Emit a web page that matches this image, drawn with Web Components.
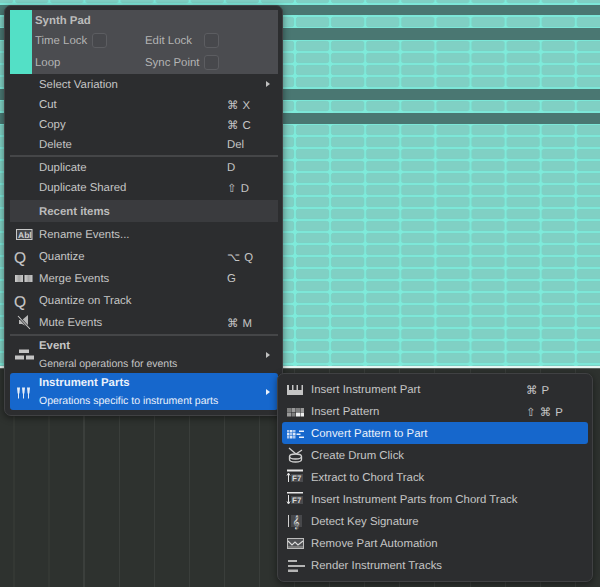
<!DOCTYPE html>
<html>
<head>
<meta charset="utf-8">
<title>Context menu</title>
<style>
    html, body { margin: 0; padding: 0; background: #2e322f; }
    body {
        width: 600px;
        height: 587px;
        overflow: hidden;
        position: relative;
        font: 11.4px "Liberation Sans", "DejaVu Sans", sans-serif;
        text-rendering: geometricPrecision;
        color: #c6c6c6;
    }
    #mainMenu { position: absolute; left: 4px; top: 5px; width: 279px; }
    #partsMenu { position: absolute; left: 277px; top: 373px; width: 316px; --menu-pad-left: 4px; }
</style>
</head>
<body>
<arrangement-view></arrangement-view>

<context-menu id="mainMenu">
    <track-header name="Synth Pad"></track-header>
    <menu-item arrow short>Select Variation</menu-item>
    <menu-item short shortcut="⌘ X">Cut</menu-item>
    <menu-item short shortcut="⌘ C">Copy</menu-item>
    <menu-item short shortcut="Del">Delete</menu-item>
    <menu-divider></menu-divider>
    <menu-item short shortcut="D">Duplicate</menu-item>
    <menu-item short shortcut="⇧ D">Duplicate Shared</menu-item>
    <menu-heading>Recent items</menu-heading>
    <menu-item icon="rename">Rename Events...</menu-item>
    <menu-item icon="quantize" shortcut="⌥ Q">Quantize</menu-item>
    <menu-item icon="merge" shortcut="G">Merge Events</menu-item>
    <menu-item icon="quantize">Quantize on Track</menu-item>
    <menu-item icon="mute" shortcut="⌘ M">Mute Events</menu-item>
    <menu-divider></menu-divider>
    <menu-item icon="event" arrow>Event<span slot="desc">General operations for events</span></menu-item>
    <menu-item icon="instrument" arrow active>Instrument Parts<span slot="desc">Operations specific to instrument parts</span></menu-item>
</context-menu>

<context-menu id="partsMenu" style="--shortcut-left: 244px">
    <menu-item icon="piano" shortcut="⌘ P">Insert Instrument Part</menu-item>
    <menu-item icon="pattern" shortcut="⇧ ⌘ P">Insert Pattern</menu-item>
    <menu-item icon="convert" active>Convert Pattern to Part</menu-item>
    <menu-item icon="drum">Create Drum Click</menu-item>
    <menu-item icon="extract">Extract to Chord Track</menu-item>
    <menu-item icon="insertchord">Insert Instrument Parts from Chord Track</menu-item>
    <menu-item icon="key">Detect Key Signature</menu-item>
    <menu-item icon="automation">Remove Part Automation</menu-item>
    <menu-item icon="render">Render Instrument Tracks</menu-item>
</context-menu>

<script>
const ICONS = {
    rename: `<rect x="4.5" y="6.5" width="15.5" height="10" fill="#444548" stroke="#c8c8c8"/>
        <text x="6" y="14.5" font-size="8.5" font-weight="bold" fill="#d0d0d0" font-family="Liberation Sans">Abl</text>`,
    quantize: `<text x="2" y="17.5" font-size="15.5" fill="#c8c8c8" stroke="#c8c8c8" stroke-width=".15" font-family="Liberation Sans">Q</text>`,
    merge: `<defs><linearGradient id="a"><stop offset="0" stop-color="#d0d0d0"/><stop offset=".5" stop-color="#a4a4a4"/><stop offset="1" stop-color="#c8c8c8"/></linearGradient></defs>
        <rect x="3" y="8" width="8" height="7" fill="url(#a)"/><rect x="12.5" y="8" width="8" height="7" fill="url(#a)"/>`,
    mute: `<path d="M7 9h3l6-5v12l-6-3H7z" fill="#b8b8b8"/><path d="M5.5 4.5 18 18" stroke="#2c2d2f" stroke-width="2.4"/><path d="M6 5 18 18" stroke="#c8c8c8" stroke-width="1.1"/>`,
    event: `<g fill="#c4c4c4"><rect x="7" y="5.5" width="10" height="3.5"/><rect x="3" y="11.5" width="9" height="4"/><rect x="14" y="11.5" width="8" height="4"/></g>`,
    instrument: `<g fill="#e2ecf8"><path d="M5 6.5h3l-.6 6H5.6z"/><path d="M10 6.5h3l-.6 6h-1.8z"/><path d="M15 6.5h3l-.6 6h-1.8z"/><rect x="6" y="12" width="1" height="5.5"/><rect x="11" y="12" width="1" height="5.5"/><rect x="16" y="12" width="1" height="5.5"/></g>`,
    piano: `<path d="M3 7h2v5h3V7h1.500v5h3V7H14v5h3.500V7H19v10H3z" fill="#c4c4c4"/>`,
    pattern: `<g><rect x="3" y="8" width="4" height="4" fill="#7e7e7e"/><rect x="7.500" y="8" width="4" height="4" fill="#9a9a9a"/><rect x="12" y="8" width="4" height="4" fill="#7e7e7e"/><rect x="16.500" y="8" width="3.500" height="4" fill="#9a9a9a"/>
        <rect x="3" y="12.500" width="4" height="4" fill="#9a9a9a"/><rect x="7.500" y="12.500" width="4" height="4" fill="#7e7e7e"/><rect x="12" y="12.500" width="4" height="4" fill="#eeeeee"/><rect x="16.500" y="12.500" width="3.500" height="4" fill="#eeeeee"/></g>`,
    convert: `<g fill="#a9c6ee"><rect x="3" y="8" width="2.500" height="2.500"/><rect x="6" y="8" width="2.500" height="2.500" fill="#dce8f8"/><rect x="9" y="8" width="2.500" height="2.500"/>
        <rect x="3" y="11" width="2.500" height="2.500" fill="#dce8f8"/><rect x="6" y="11" width="2.500" height="2.500"/><rect x="9" y="11" width="2.500" height="2.500" fill="#dce8f8"/>
        <rect x="3" y="14" width="2.500" height="2.500"/><rect x="6" y="14" width="2.500" height="2.500" fill="#dce8f8"/><rect x="9" y="14" width="2.500" height="2.500"/></g>
        <g fill="#e8f0fb"><rect x="15" y="8.500" width="5" height="1.500"/><rect x="12.500" y="11.500" width="4" height="1.500"/><rect x="15" y="14.500" width="5" height="1.500"/></g>`,
    drum: `<g fill="none" stroke="#cfcfcf" stroke-width="1.300"><path d="M5 4l7 6M18 6l-6 4"/><ellipse cx="11.500" cy="12.500" rx="6" ry="2.500"/><path d="M5.500 12.500v3c0 1.500 2.500 2.500 6 2.500s6-1 6-2.500v-3"/></g>`,
    extract: `<rect x="3" y="3.500" width="16" height="2" fill="#e6e6e6"/><path d="M4.500 16V8M3 9.500l1.500-2.500L6 9.500" stroke="#e6e6e6" fill="none"/>
        <rect x="7" y="8" width="12" height="8" fill="#4a4b4e"/><text x="8" y="15" font-size="8" font-weight="bold" fill="#d8d8d8" font-family="Liberation Sans">F7</text>`,
    insertchord: `<rect x="3" y="4" width="16" height="1.500" fill="#e6e6e6"/><path d="M4.500 7v8M3 13.500 4.500 16 6 13.500" stroke="#e6e6e6" fill="none"/>
        <rect x="7" y="8" width="12" height="8" fill="#4a4b4e"/><text x="8" y="15" font-size="8" font-weight="bold" fill="#d8d8d8" font-family="Liberation Sans">F7</text>`,
    key: `<rect x="4" y="5" width="1" height="12" fill="#d0d0d0"/><rect x="7" y="5" width="11" height="12" fill="#47484b"/>
        <text x="8.500" y="15.500" font-size="12" fill="#e0e0e0" font-family="DejaVu Sans">𝄞</text>`,
    automation: `<rect x="3.500" y="6.500" width="16" height="10" fill="#505154" stroke="#bcbcbc"/><path d="M4 9l4 4 3-3 3 3 5-4" fill="none" stroke="#dcdcdc" stroke-width="1.100"/><rect x="4" y="14" width="15" height="2" fill="#7a7a7a"/>`,
    render: `<g fill="#b4b4b4"><rect x="4" y="6" width="9" height="2"/><rect x="4" y="11" width="17" height="2"/><rect x="4" y="15.500" width="10" height="2.500"/></g>`
};

class ArrangementView extends HTMLElement {
    constructor() {
        super();
        this.attachShadow({ mode: 'open' });
        const bars = [13.5, 48.5, 83.5, 119, 154, 189, 224, 259, 294, 329, 364, 399, 434, 470, 505, 540, 575]
            .map(x => `<rect x="${x}" y="369" width="1" height="218" fill="${x === 83.5 ? '#484c4a' : '#3a3e3b'}"/>`)
            .join('');
        this.shadowRoot.innerHTML = `
            <style>
                :host { display: block; width: 600px; height: 587px; }
                svg { display: block; }
            </style>
            <svg width="600" height="587" viewBox="0 0 600 587">
                <defs>
                    <pattern id="cells" x="14.2" y="4" width="35.1" height="12" patternUnits="userSpaceOnUse">
                        <rect width="35.1" height="12" fill="#7eebdb"/>
                        <rect x="1.25" y="1.25" width="32.6" height="9.500" rx="2" fill="#80d0c4" stroke="#78c8bc" stroke-width=".5"/>
                    </pattern>
                </defs>
                <rect width="600" height="366" fill="url(#cells)"/>
                <rect y="5" width="600" height="10" fill="#4a7772"/>
                <rect y="28" width="600" height="12" fill="#4a7772"/>
                <rect y="89" width="600" height="11" fill="#4a7772"/>
                <rect y="113" width="600" height="11" fill="#4a7772"/>
                <rect y="366" width="600" height="2.500" fill="#e6f6f3"/>
                <rect y="368.500" width="600" height="218.500" fill="#2e322f"/>
                ${bars}
            </svg>
        `;
    }
}

class ContextMenu extends HTMLElement {
    constructor() {
        super();
        this.attachShadow({ mode: 'open' });
        this.shadowRoot.innerHTML = `
            <style>
                :host {
                    display: flex;
                    flex-direction: column;
                    box-sizing: border-box;
                    padding: 4px 4px 5px var(--menu-pad-left, 5px);
                    background: #2c2d2f;
                    border: 1px solid #404143;
                    border-radius: 7px;
                    box-shadow: 0 2px 7px rgba(0, 0, 0, .45);
                }
            </style>
            <slot></slot>
        `;
    }
}

class TrackHeader extends HTMLElement {
    constructor() {
        super();
        this.attachShadow({ mode: 'open' });
        this.shadowRoot.innerHTML = `
            <style>
                :host {
                    display: flex;
                    height: 64px;
                    background: #4b4c50;
                    color: #b4b4b4;
                }
                .swatch { width: 22px; background: #53e0c6; }
                .fields {
                    flex: 1;
                    padding-left: 3px;
                    display: grid;
                    grid-template-columns: 110px 1fr;
                    grid-template-rows: 20px 21px 22px;
                    align-items: center;
                }
                .name { grid-column: 1 / 3; font-weight: bold; color: #bcbcbc; padding-top: 1px; }
                .field { display: flex; align-items: center; }
                .field span { width: 57px; }
                .field.wide span { width: 59px; }
                .field.low span { padding-top: 1px; }
                .box {
                    box-sizing: border-box;
                    width: 15px;
                    height: 15px;
                    background: #47484c;
                    border: 1px solid #5c5d61;
                    border-radius: 3px;
                }
            </style>
            <div class="swatch"></div>
            <div class="fields">
                <div class="name"></div>
                <div class="field"><span>Time Lock</span><div class="box"></div></div>
                <div class="field wide"><span>Edit Lock</span><div class="box"></div></div>
                <div class="field low"><span>Loop</span></div>
                <div class="field wide low"><span>Sync Point</span><div class="box"></div></div>
            </div>
        `;
        this.shadowRoot.querySelector('.name').textContent = this.getAttribute('name');
    }
}

class MenuItem extends HTMLElement {
    constructor() {
        super();
        this.attachShadow({ mode: 'open' });
        this.shadowRoot.innerHTML = `
            <style>
                :host {
                    display: flex;
                    align-items: center;
                    position: relative;
                    height: 22px;
                    border-radius: 3px;
                    color: #c6c6c6;
                }
                :host([short]) { height: 20px; }
                :host([active]) { background: #1667cc; color: #eaf1fb; }
                :host(.two) { height: 37px; }
                .icon { flex: none; width: 22px; height: 22px; margin: 0 5px 0 2px; }
                .icon svg { display: block; }
                .text { display: flex; flex-direction: column; white-space: nowrap; padding-top: 1px; }
                .shortcut {
                    position: absolute;
                    left: var(--shortcut-left, 217px);
                    top: 50%;
                    transform: translateY(-50%);
                    white-space: nowrap;
                    word-spacing: 1px;
                    padding-top: 1px;
                }
                .arrow {
                    position: absolute;
                    right: 8px;
                    top: 50%;
                    margin-top: -3px;
                    border-left: 4px solid #c0c0c0;
                    border-top: 3px solid transparent;
                    border-bottom: 3px solid transparent;
                }
                :host([active]) .arrow { border-left-color: #eaf1fb; }
                :host(.two) .text { align-self: flex-start; padding-top: 1px; }
                :host(.two) .main { font-weight: bold; line-height: 18px; }
                :host(.two) .desc { font-size: 10.5px; line-height: 18px; }
            </style>
            <div class="icon"></div>
            <div class="text">
                <div class="main"><slot></slot></div>
                <div class="desc"><slot name="desc"></slot></div>
            </div>
            <div class="shortcut"></div>
        `;
        const icon = this.getAttribute('icon');
        if (icon) {
            this.shadowRoot.querySelector('.icon').innerHTML =
                `<svg width="22" height="22" viewBox="0 0 22 22">${ICONS[icon]}</svg>`;
        }
        this.shadowRoot.querySelector('.shortcut').textContent = this.getAttribute('shortcut') || '';
        if (this.hasAttribute('arrow')) {
            const arrow = document.createElement('div');
            arrow.className = 'arrow';
            this.shadowRoot.appendChild(arrow);
        }
    }

    connectedCallback() {
        if (this.querySelector('[slot="desc"]')) {
            this.classList.add('two');
        }
    }
}

class MenuDivider extends HTMLElement {
    constructor() {
        super();
        this.attachShadow({ mode: 'open' });
        this.shadowRoot.innerHTML = `
            <style>
                :host { display: block; height: 2px; margin-top: 1px; background: #454648; }
            </style>
        `;
    }
}

class MenuHeading extends HTMLElement {
    constructor() {
        super();
        this.attachShadow({ mode: 'open' });
        this.shadowRoot.innerHTML = `
            <style>
                :host {
                    display: flex;
                    align-items: center;
                    box-sizing: border-box;
                    height: 22px;
                    margin: 3px 0 1px;
                    padding: 1px 0 0 29px;
                    background: #3a3b3e;
                    font-weight: bold;
                    color: #bcbcbc;
                }
            </style>
            <slot></slot>
        `;
    }
}

customElements.define('arrangement-view', ArrangementView);
customElements.define('context-menu', ContextMenu);
customElements.define('track-header', TrackHeader);
customElements.define('menu-item', MenuItem);
customElements.define('menu-divider', MenuDivider);
customElements.define('menu-heading', MenuHeading);
</script>
</body>
</html>
